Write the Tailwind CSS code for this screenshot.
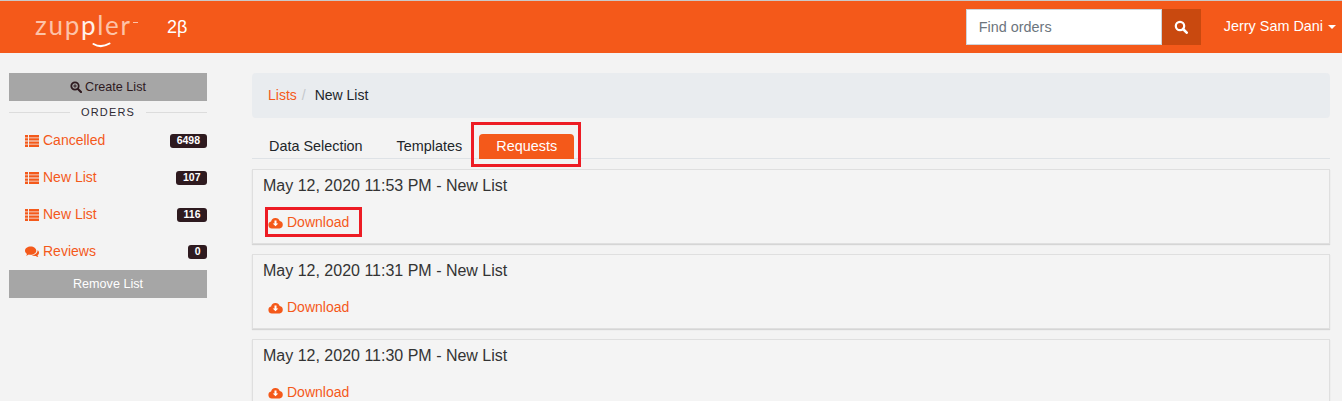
<!DOCTYPE html>
<html lang="en">
<head>
  <meta charset="UTF-8" />
  <title>Zuppler Lists</title>
  <script src="https://cdn.jsdelivr.net/npm/@tailwindcss/browser@4"></script>
</head>
<body class="bg-[#f3f3f3] h-[401px] overflow-hidden font-['Liberation_Sans',Arial,sans-serif] text-[14px] text-[#212529]">
  <!-- top bar -->
  <header class="h-[53px] bg-[#f4591a] border-t border-[#c9c9c9] flex items-center">
    <div class="w-[160px] pl-[35px] relative h-full flex items-center">
      <span class="font-['Lato',sans-serif] text-[26px] leading-none tracking-[1.7px] text-[#fdc3a8] -mt-[5px]">zup<span class="text-[#fff0e8]">p</span>ler</span>
      <span class="absolute left-[133px] top-[21px] w-[5px] h-px bg-[#fdc3a8]"></span>
      <svg class="absolute left-[92px] top-[41px]" width="19" height="7" viewBox="0 0 19 7"><path d="M1.500 2Q9 6.500 17.500 1.500" fill="none" stroke="#fff" stroke-width="2" stroke-linecap="round"/></svg>
    </div>
    <span class="ml-[7px] text-[18px] text-white">2β</span>
    <div class="ml-auto flex items-center text-[14.4px]">
      <div class="w-[196px] h-[36px] pt-[1px] bg-white border border-[#ced4da] flex items-center pl-[12px] text-[#6c757d]">Find orders</div>
      <div class="w-[39px] h-[36px] bg-[#c9490f] flex items-center justify-center">
        <svg width="14" height="14" viewBox="0 0 14 14"><circle cx="6" cy="6" r="4.2" fill="none" stroke="#fff" stroke-width="2.2"/><path d="M9 9l3.700 3.700" stroke="#fff" stroke-width="2.600" stroke-linecap="round"/></svg>
      </div>
      <div class="ml-[23px] mr-[6px] flex items-center text-white">
        Jerry Sam Dani
        <span class="ml-[5px] w-0 h-0 border-x-[4px] border-x-transparent border-t-[4px] border-t-white"></span>
      </div>
    </div>
  </header>

  <div class="flex items-start pt-[20px]">
    <!-- sidebar -->
    <aside class="ml-[9px] w-[198px] shrink-0 text-[#f4591a]">
      <div class="h-[28px] bg-[#a6a6a6] text-[#2e1a1f] text-[12.6px] flex items-center justify-center gap-[3px]">
        <svg width="12" height="12" viewBox="0 0 12 12"><circle cx="5" cy="5" r="3.700" fill="none" stroke="#2e1a1f" stroke-width="1.800"/><path d="M8 8l3 3" stroke="#2e1a1f" stroke-width="2.200" stroke-linecap="round"/><path d="M3.300 5h3.400M5 3.300v3.400" stroke="#2e1a1f"/></svg>
        Create List
      </div>
      <div class="h-[21px] pt-[1px] flex items-center gap-[11px]">
        <span class="flex-1 h-px bg-[#dcdcdc]"></span>
        <span class="text-[#2e2a33] text-[11px] tracking-[1.2px]">ORDERS</span>
        <span class="flex-1 h-px bg-[#dcdcdc]"></span>
      </div>
      <div class="h-[37px] flex items-center pl-[16px]">
        <svg class="mr-[4px]" width="14" height="12" viewBox="0 0 14 12" fill="#f4591a"><path d="M0 0h3v2.400H0zM4 0h10v2.400H4zM0 3.200h3v2.400H0zM4 3.200h10v2.400H4zM0 6.400h3v2.400H0zM4 6.400h10v2.400H4zM0 9.600h3V12H0zM4 9.600h10V12H4z"/></svg>
        Cancelled
        <span class="ml-auto h-[14px] px-[7px] rounded-[3px] bg-[#2e1a1f] text-white text-[10.5px] font-bold flex items-center">6498</span>
      </div>
      <div class="h-[37px] flex items-center pl-[16px]">
        <svg class="mr-[4px]" width="14" height="12" viewBox="0 0 14 12" fill="#f4591a"><path d="M0 0h3v2.400H0zM4 0h10v2.400H4zM0 3.200h3v2.400H0zM4 3.200h10v2.400H4zM0 6.400h3v2.400H0zM4 6.400h10v2.400H4zM0 9.600h3V12H0zM4 9.600h10V12H4z"/></svg>
        New List
        <span class="ml-auto h-[14px] px-[6.5px] rounded-[3px] bg-[#2e1a1f] text-white text-[10.5px] font-bold flex items-center">107</span>
      </div>
      <div class="h-[37px] flex items-center pl-[16px]">
        <svg class="mr-[4px]" width="14" height="12" viewBox="0 0 14 12" fill="#f4591a"><path d="M0 0h3v2.400H0zM4 0h10v2.400H4zM0 3.200h3v2.400H0zM4 3.200h10v2.400H4zM0 6.400h3v2.400H0zM4 6.400h10v2.400H4zM0 9.600h3V12H0zM4 9.600h10V12H4z"/></svg>
        New List
        <span class="ml-auto h-[14px] px-[6.5px] rounded-[3px] bg-[#2e1a1f] text-white text-[10.5px] font-bold flex items-center">116</span>
      </div>
      <div class="h-[37px] flex items-center pl-[16px]">
        <svg class="mr-[4px]" width="14" height="12" viewBox="0 0 14 12"><path d="M5.700 0.500C2.600 0.500 0 2.300 0 4.700c0 1.300.8 2.500 2 3.200-.2.7-.6 1.300-1 1.800 1-.1 2-.6 2.800-1.200.6.1 1.200.2 1.900.2 3.100 0 5.600-1.800 5.600-4S8.800.5 5.700.5z" fill="#f4591a"/><path d="M12.600 4.200c.9.600 1.400 1.500 1.400 2.500 0 1-.6 1.900-1.500 2.500.1.700.5 1.300.9 1.800-1-.1-1.900-.5-2.600-1.100-1.500.2-3-.1-4-.8 2.800-.1 5.700-1.700 5.800-4.900z" fill="#f4591a"/></svg>
        Reviews
        <span class="ml-auto h-[14px] px-[6.5px] rounded-[3px] bg-[#2e1a1f] text-white text-[10.5px] font-bold flex items-center">0</span>
      </div>
      <div class="h-[28px] bg-[#a6a6a6] text-white text-[12.6px] flex items-center justify-center">Remove List</div>
    </aside>

    <!-- main -->
    <main class="ml-[45px] mr-[12px] flex-1 min-w-0">
      <nav class="h-[45px] bg-[#e9ecef] rounded-[4px] flex items-center pl-[16px]">
        <span class="text-[#f4591a]">Lists</span>
        <span class="text-[#c4c8cc] ml-[5px] mr-[9px]">/</span>
        <span>New List</span>
      </nav>

      <div class="relative h-[41px] border-b border-[#dee2e6] flex items-end text-[14.4px]">
        <span class="ml-[17px] h-[25px] -mb-px flex items-center">Data Selection</span>
        <span class="ml-[34px] h-[25px] -mb-px flex items-center">Templates</span>
        <span class="ml-[17px] w-[95px] h-[25px] -mb-px bg-[#f4591a] rounded-t-[4px] text-white flex items-center justify-center">Requests</span>
        <span class="absolute left-[219px] top-[4px] w-[110px] h-[45px] border-[3px] border-[#ed1c24]"></span>
      </div>

      <section class="mt-[10px] h-[75px] border border-[#dfdfdf] shadow-[0_1px_1px_rgba(0,0,0,0.12)] bg-[#f4f4f4] pl-[10px]">
        <h2 class="mt-[6px] text-[16px] leading-[19px] text-[#333]">May 12, 2020 11:53 PM - New List</h2>
        <div class="relative mt-[17px] ml-[5px] flex items-center text-[#f4591a]">
          <svg class="mr-[4px]" width="15" height="12" viewBox="0 0 15 12"><path d="M4 11.500a3.500 3.500 0 0 1-.9-6.900A4.500 4.500 0 0 1 11.700 4 3.800 3.800 0 0 1 11.500 11.500z" fill="#f4591a"/><path d="M6.500 3.500h2v3h1.800L7.500 9.300 4.700 6.500h1.800z" fill="#fff"/></svg>
          Download
          <span class="absolute -left-[3px] -top-[5px] w-[97px] h-[30px] border-[3px] border-[#ed1c24]"></span>
        </div>
      </section>

      <section class="mt-[10px] h-[75px] border border-[#dfdfdf] shadow-[0_1px_1px_rgba(0,0,0,0.12)] bg-[#f4f4f4] pl-[10px]">
        <h2 class="mt-[6px] text-[16px] leading-[19px] text-[#333]">May 12, 2020 11:31 PM - New List</h2>
        <div class="mt-[17px] ml-[5px] flex items-center text-[#f4591a]">
          <svg class="mr-[4px]" width="15" height="12" viewBox="0 0 15 12"><path d="M4 11.500a3.500 3.500 0 0 1-.9-6.900A4.500 4.500 0 0 1 11.700 4 3.800 3.800 0 0 1 11.500 11.500z" fill="#f4591a"/><path d="M6.500 3.500h2v3h1.800L7.500 9.300 4.700 6.500h1.800z" fill="#fff"/></svg>
          Download
        </div>
      </section>

      <section class="mt-[10px] h-[75px] border border-[#dfdfdf] shadow-[0_1px_1px_rgba(0,0,0,0.12)] bg-[#f4f4f4] pl-[10px]">
        <h2 class="mt-[6px] text-[16px] leading-[19px] text-[#333]">May 12, 2020 11:30 PM - New List</h2>
        <div class="mt-[17px] ml-[5px] flex items-center text-[#f4591a]">
          <svg class="mr-[4px]" width="15" height="12" viewBox="0 0 15 12"><path d="M4 11.500a3.500 3.500 0 0 1-.9-6.900A4.500 4.500 0 0 1 11.700 4 3.800 3.800 0 0 1 11.500 11.500z" fill="#f4591a"/><path d="M6.500 3.500h2v3h1.800L7.500 9.300 4.700 6.500h1.800z" fill="#fff"/></svg>
          Download
        </div>
      </section>
    </main>
  </div>
</body>
</html>
